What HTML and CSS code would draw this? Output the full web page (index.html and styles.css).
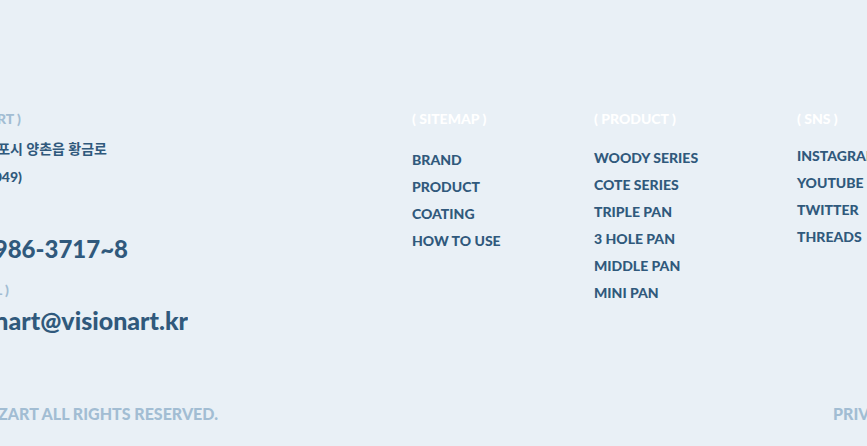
FILE: index.html
```html
<!DOCTYPE html>
<html lang="ko">
<head>
<meta charset="utf-8">
<title>Visionart</title>
<link rel="stylesheet" href="styles.css">
</head>
<body>
<footer class="footer">
  <div class="main">
    <address class="contact">
      <p class="line label name"><span>RT )</span></p>
      <p class="line street"><span>포시 양촌읍 황금로</span></p>
      <p class="line postcode"><span>049)</span></p>
      <p class="line large phone"><a href="#">986-3717~8</a></p>
      <p class="line label email-label"><span>L )</span></p>
      <p class="line large email"><a href="#">nart@visionart.kr</a></p>
    </address>
    <nav class="group sitemap">
      <h2>( SITEMAP )</h2>
      <ul>
        <li><a href="#">BRAND</a></li>
        <li><a href="#">PRODUCT</a></li>
        <li><a href="#">COATING</a></li>
        <li><a href="#">HOW TO USE</a></li>
      </ul>
    </nav>
    <nav class="group product">
      <h2>( PRODUCT )</h2>
      <ul>
        <li><a href="#">WOODY SERIES</a></li>
        <li><a href="#">COTE SERIES</a></li>
        <li><a href="#">TRIPLE PAN</a></li>
        <li><a href="#">3 HOLE PAN</a></li>
        <li><a href="#">MIDDLE PAN</a></li>
        <li><a href="#">MINI PAN</a></li>
      </ul>
    </nav>
    <nav class="group sns">
      <h2>( SNS )</h2>
      <ul>
        <li><a href="#">INSTAGRAM</a></li>
        <li><a href="#">YOUTUBE</a></li>
        <li><a href="#">TWITTER</a></li>
        <li><a href="#">THREADS</a></li>
      </ul>
    </nav>
  </div>
  <div class="legal">
    <p class="line copyright"><span>ZART ALL RIGHTS RESERVED.</span></p>
    <a class="privacy" href="#">PRIVACY</a>
  </div>
</footer>
</body>
</html>
```
FILE: styles.css
```css
* {
  box-sizing: border-box;
}

body {
  margin: 0;
  overflow: hidden;
  background: #e9f0f6;
  color: #30597c;
  font: 900 14px/28px Lato, "Noto Sans CJK KR", sans-serif;
}

h2, p, ul {
  margin: 0;
  padding: 0;
}

a {
  color: inherit;
  text-decoration: none;
}

.footer {
  padding-top: 105px;
  overflow: hidden;
}

.main {
  display: grid;
  grid-template-columns: 412fr 182fr 203fr 70fr;
}

.contact {
  font-style: normal;
}

/* Lines run off the left edge of the page and stop at a set right edge. */
.line {
  display: flex;
  justify-content: flex-end;
  overflow: hidden;
  white-space: nowrap;
}

.label {
  color: #a2bdd3;
}

.name {
  width: 21px;
}

.street {
  width: 107px;
  margin-top: 2px;
  font-weight: 700;
}

.postcode {
  width: 22px;
}

.large {
  font-size: 24px;
  line-height: 32px;
}

.phone {
  width: 128px;
  margin-top: 42px;
}

.email-label {
  width: 9px;
  margin-top: 11px;
}

.email {
  width: 188px;
  font-size: 25px;
}

.group {
  min-width: 0;
  white-space: nowrap;
}

.group h2 {
  color: #fff;
  font: inherit;
}

.group ul {
  list-style: none;
  line-height: 27px;
}

.sitemap ul {
  margin-top: 13px;
}

.product ul {
  margin-top: 11px;
}

.sns ul {
  margin-top: 9px;
}

.legal {
  display: grid;
  grid-template-columns: 833fr 34fr;
  margin-top: 64px;
  color: #a2bdd3;
  font-size: 16px;
}

.copyright {
  width: 218px;
}

.privacy {
  min-width: 0;
}
```
